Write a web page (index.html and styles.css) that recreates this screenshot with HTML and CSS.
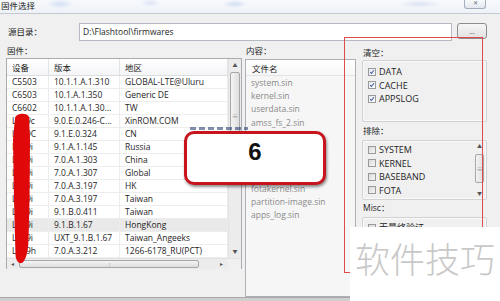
FILE: index.html
```html
<!DOCTYPE html>
<html lang="zh-CN">
<head>
  <meta charset="UTF-8">
  <title>固件选择</title>
  <link rel="stylesheet" href="styles.css">
</head>
<body>

  <div class="dialog">
    <div class="titlebar">
      <span class="title">固件选择</span>
      <span class="close">✕</span>
    </div>

    <div class="pathrow">
      <span class="pathlabel">源目录：</span>
      <div class="pathinput">D:\Flashtool\firmwares</div>
      <div class="browse">...</div>
    </div>

    <div class="main">
      <!-- firmware table -->
      <section class="firmwares">
        <div class="caption">固件：</div>
        <div class="table">
          <div class="tbody">
            <div class="cols">
              <div class="row thead"><span>设备</span><span>版本</span><span>地区</span></div>
              <div class="row"><span>C5503</span><span>10.1.1.A.1.310</span><span>GLOBAL-LTE@Uluru</span></div>
              <div class="row"><span>C6503</span><span>10.1.A.1.350</span><span>Generic DE</span></div>
              <div class="row"><span>C6602</span><span>10.1.1.A.1.30...</span><span>TW</span></div>
              <div class="row"><span>LT39c</span><span>9.0.E.0.246-C...</span><span>XinROM.COM</span></div>
              <div class="row"><span>LT39C</span><span>9.1.E.0.324</span><span>CN</span></div>
              <div class="row"><span>LT39i</span><span>9.1.A.1.145</span><span>Russia</span></div>
              <div class="row"><span>LT39i</span><span>7.0.A.1.303</span><span>China</span></div>
              <div class="row"><span>LT39i</span><span>7.0.A.1.307</span><span>Global</span></div>
              <div class="row"><span>LT39i</span><span>7.0.A.3.197</span><span>HK</span></div>
              <div class="row"><span>LT39i</span><span>7.0.A.3.197</span><span>Taiwan</span></div>
              <div class="row"><span>LT39i</span><span>9.1.B.0.411</span><span>Taiwan</span></div>
              <div class="row selected"><span>LT39i</span><span>9.1.B.1.67</span><span>HongKong</span></div>
              <div class="row"><span>LT39i</span><span>UXT_9.1.B.1.67</span><span>Taiwan_Angeeks</span></div>
              <div class="row"><span>LT39h</span><span>7.0.A.3.212</span><span>1266-6178_RU(PCT)</span></div>
            </div>
            <div class="vscroll">
              <span class="arrow">▲</span>
              <span class="thumb"><i>≡</i></span>
              <span class="track"></span>
              <span class="arrow">▼</span>
            </div>
          </div>
          <div class="hscroll">
            <span class="arrow">◂</span>
            <span class="hthumb"><i>⦙</i></span>
            <span class="track"></span>
            <span class="arrow">▸</span>
            <span class="corner"></span>
          </div>
        </div>
      </section>

      <!-- content list -->
      <section class="content">
        <div class="caption">内容：</div>
        <div class="filelist">
          <div class="filehead">文件名</div>
          <div class="file">system.sin</div>
          <div class="file">kernel.sin</div>
          <div class="file">userdata.sin</div>
          <div class="file">amss_fs_2.sin</div>
          <div class="file">amss_fsg.sin</div>
          <div class="file">amss_fs_1.sin</div>
          <div class="file">cache.sin</div>
          <div class="file">modem.sin</div>
          <div class="file">fotakernel.sin</div>
          <div class="file">partition-image.sin</div>
          <div class="file">apps_log.sin</div>
        </div>
      </section>

      <!-- options -->
      <section class="options">
        <div class="caption">清空：</div>
        <div class="group wipe">
          <label class="check"><span class="box on"><svg viewBox="0 0 8 8"><path d="M1.6 4.2 L3.3 6 L6.6 1.6"/></svg></span>DATA</label>
          <label class="check"><span class="box on"><svg viewBox="0 0 8 8"><path d="M1.6 4.2 L3.3 6 L6.6 1.6"/></svg></span>CACHE</label>
          <label class="check"><span class="box on"><svg viewBox="0 0 8 8"><path d="M1.6 4.2 L3.3 6 L6.6 1.6"/></svg></span>APPSLOG</label>
        </div>
        <div class="caption">排除：</div>
        <div class="group exclude">
          <div class="checks">
            <label class="check"><span class="box"></span>SYSTEM</label>
            <label class="check"><span class="box"></span>KERNEL</label>
            <label class="check"><span class="box"></span>BASEBAND</label>
            <label class="check"><span class="box"></span>FOTA</label>
          </div>
          <div class="vscroll small">
            <span class="arrow">▲</span>
            <span class="track short"></span>
            <span class="thumb"><i>≡</i></span>
            <span class="track"></span>
            <span class="arrow">▼</span>
          </div>
        </div>
        <div class="caption">Misc：</div>
        <div class="group misc">
          <label class="check"><span class="box"></span>无最终验证</label>
        </div>
      </section>
    </div>
  </div>

  <!-- things drawn over the screenshot -->
  <svg class="brush" viewBox="0 0 500 301" width="500" height="301">
    <path d="M15 118 C16 113 27 112 29 117 L30 140 L29.5 200 L28.5 240 C28 252 26 260 22 263 C18 264 16 260 15.5 255 L14 200 L13 140 Z"/>
  </svg>
  <div class="marker"></div>
  <div class="smear"></div>
  <div class="badge">6</div>
  <div class="watermark">软件技巧</div>

</body>
</html>
```

FILE: styles.css
```css
body {
  margin: 0;
  width: 500px;
  height: 301px;
  overflow: hidden;
  position: relative;
  background: #cfcfcf;
  font-family: 'Open Sans', 'Noto Sans CJK SC', sans-serif;
  font-size: 8.5px;
  color: #1e1e1e;
}

.dialog {
  height: 297px;
  background: #f0f0f0;
  border-bottom: 1px solid #a8a8a8;
  display: flex;
  flex-direction: column;
}

/* Title bar */
.titlebar {
  height: 14px;
  border-bottom: 1px solid #c2c9d3;
  background:
    radial-gradient(ellipse 14px 5px at 60px 4px, #d6e0f3 0%, transparent 100%),
    radial-gradient(ellipse 10px 4px at 150px 3px, #dde5f5 0%, transparent 100%),
    radial-gradient(ellipse 12px 4px at 235px 4px, #d3def2 0%, transparent 100%),
    radial-gradient(ellipse 20px 4px at 420px 4px, #dbe3f3 0%, transparent 100%),
    linear-gradient(#f7f9fc, #eef2f8);
  display: flex;
  justify-content: space-between;
  align-items: flex-start;
}
.title {
  padding-left: 1px;
  line-height: 11px;
  color: #222;
}
.close {
  width: 20px;
  height: 8px;
  margin-right: 14px;
  border: 1px solid #a4adba;
  border-top: none;
  border-radius: 0 0 3px 3px;
  background: linear-gradient(#f8f9fb, #e3e7ee);
  font-size: 6px;
  line-height: 7px;
  text-align: center;
  color: #6a6f78;
}

/* Source directory row */
.pathrow {
  display: flex;
  align-items: flex-start;
  margin-top: 9px;
  padding-left: 8px;
}
.pathlabel {
  width: 71px;
  line-height: 18px;
  color: #222;
}
.pathinput {
  width: 368px;
  height: 16px;
  border: 1px solid #b5b9c2;
  background: #fff;
  padding-left: 3px;
  line-height: 16px;
}
.browse {
  width: 28px;
  height: 14px;
  margin-left: 5px;
  border: 1px solid #8d8d8d;
  border-radius: 3px;
  background: linear-gradient(#f6f6f6, #e2e2e2);
  text-align: center;
  line-height: 16px;
  font-size: 7px;
  color: #444;
}

/* Main three sections */
.main {
  display: grid;
  grid-template-columns: 236px 111px 128px;
  column-gap: 3px;
  padding-left: 6px;
  margin-top: 3px;
  flex: 1;
}
.main .options {
  margin-left: 3px;
  padding-top: 2px;
}
.caption {
  line-height: 14px;
  padding-left: 1px;
}

/* Firmware table */
.table {
  height: 209px;
  border: 1px solid #a9abb0;
  background: #fff;
  display: flex;
  flex-direction: column;
}
.tbody {
  display: flex;
  flex: 1;
}
.cols {
  width: 221px;
}
.row {
  display: grid;
  grid-template-columns: 42px 71px 108px;
  height: 13px;
  border-bottom: 1px solid #ededed;
  box-sizing: border-box;
  line-height: 12px;
  white-space: nowrap;
}
.row span {
  padding-left: 5px;
  border-right: 1px solid #ececec;
  overflow: hidden;
}
.row.thead {
  height: 17px;
  line-height: 17px;
  background: linear-gradient(#ffffff, #f4f5f7);
  border-bottom: 1px solid #dcdde0;
}
.row.thead span {
  border-right-color: #e2e3e6;
}
.row.selected {
  background: #e9e9e9;
}

/* Scrollbars */
.vscroll {
  width: 13px;
  display: flex;
  flex-direction: column;
  align-items: center;
  background: #ececec;
  border-left: 1px solid #e3e3e3;
  box-sizing: border-box;
}
.arrow {
  font-size: 5px;
  line-height: 13px;
  height: 13px;
  color: #555;
}
.thumb {
  width: 10px;
  height: 86px;
  box-sizing: border-box;
  border: 1px solid #a7a7a7;
  border-radius: 2px;
  background: linear-gradient(90deg, #f4f4f4, #dedede);
  display: flex;
  align-items: center;
  justify-content: center;
}
.thumb i {
  font-style: normal;
  font-size: 6px;
  color: #888;
}
.track {
  flex: 1;
}
.hscroll {
  height: 10px;
  display: flex;
  align-items: center;
  background: #ececec;
  border-top: 1px solid #e3e3e3;
}
.hscroll .arrow {
  width: 10px;
  line-height: 10px;
  height: 10px;
  text-align: center;
  font-size: 6px;
}
.hthumb {
  width: 180px;
  height: 8px;
  margin-left: 2px;
  box-sizing: border-box;
  border: 1px solid #a7a7a7;
  border-radius: 2px;
  background: linear-gradient(#f4f4f4, #dedede);
  text-align: center;
  line-height: 6px;
}
.hthumb i {
  font-style: normal;
  font-size: 5px;
  color: #888;
}
.corner {
  width: 13px;
  height: 10px;
  margin-left: 2px;
  background: #f0f0f0;
}

/* Content list */
.content .filelist {
  height: 236px;
  margin-top: 1px;
  border: 1px solid #aeb0b5;
  background: #f6f6f6;
}
.filehead {
  height: 16px;
  line-height: 17px;
  padding-left: 6px;
  background: linear-gradient(#ffffff, #f7f7f8);
  border-bottom: 1px solid #e4e4e4;
  box-sizing: border-box;
}
.file {
  line-height: 13.2px;
  padding-left: 5px;
  color: #8a8a8a;
  white-space: nowrap;
}

/* Options groups */
.group {
  border: 1px solid #d2d2d2;
  border-radius: 2px;
  box-shadow: inset 0 0 0 1px #fafafa;
  box-sizing: border-box;
}
.group.wipe {
  height: 62px;
  padding-top: 4px;
  margin-bottom: 2px;
}
.group.exclude {
  height: 60px;
  margin-top: 2px;
  margin-bottom: 1px;
  display: flex;
}
.group.exclude .checks {
  flex: 1;
  padding-top: 2px;
}
.group.misc {
  height: 60px;
  margin-top: 2px;
  padding-top: 3px;
}
.check {
  display: flex;
  align-items: center;
  height: 13.5px;
  padding-left: 5px;
  font-size: 9px;
  color: #1e1e1e;
}
.box {
  width: 8px;
  height: 8px;
  margin-right: 3px;
  box-sizing: border-box;
  border: 1px solid #9a9a9a;
  background: linear-gradient(135deg, #d9d9d9, #f7f7f7);
  display: flex;
}
.box.on {
  background: linear-gradient(135deg, #e4e7ee, #ffffff);
}
.box svg {
  width: 6px;
  height: 6px;
  fill: none;
  stroke: #3e5b9c;
  stroke-width: 1.4;
}
.vscroll.small {
  width: 11px;
  margin: 1px 1px 1px 0;
  border-left: none;
  background: #f0f0f0;
}
.vscroll.small .arrow {
  height: 9px;
  line-height: 9px;
}
.vscroll.small .track.short {
  flex: 0 0 3px;
}
.vscroll.small .thumb {
  width: 9px;
  height: 29px;
}

/* Overlays drawn on top of the dialog */
.brush {
  position: absolute;
  left: 0;
  top: 0;
  pointer-events: none;
}
.brush path {
  fill: #e00808;
}
.marker {
  position: absolute;
  left: 344px;
  top: 37px;
  width: 137px;
  height: 234px;
  border: 1px solid #e04a4a;
  pointer-events: none;
}
.smear {
  position: absolute;
  left: 190px;
  top: 127px;
  width: 58px;
  height: 3px;
  background: repeating-linear-gradient(90deg, #2f4677 0 6px, transparent 6px 9px);
  opacity: 0.6;
  filter: blur(0.6px);
}
.badge {
  position: absolute;
  left: 184px;
  top: 131px;
  width: 136px;
  height: 48px;
  border: 3px solid #c8141c;
  border-radius: 10px;
  background: #fff;
  box-shadow: 1px 2px 3px rgba(0, 0, 0, 0.45);
  font-family: 'Liberation Sans', sans-serif;
  font-weight: bold;
  font-size: 24px;
  line-height: 36px;
  text-align: center;
  color: #111;
}
.watermark {
  position: absolute;
  left: 350px;
  top: 227px;
  width: 150px;
  height: 74px;
  background: #fff;
  font-family: 'Noto Sans CJK SC', sans-serif;
  font-weight: 300;
  font-size: 35px;
  line-height: 62px;
  text-align: center;
  color: #c8c8c8;
  letter-spacing: 0;
}
```
